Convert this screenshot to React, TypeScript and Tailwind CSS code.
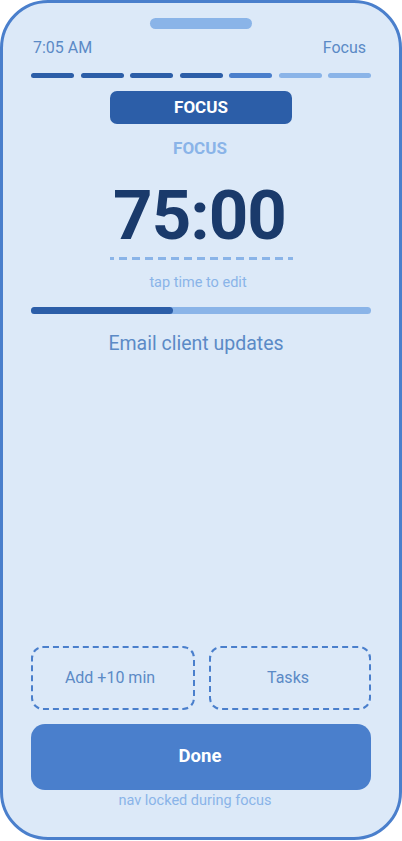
import React from "react";

export default function App() {
  const segs = ["#2c5ea8", "#2c5ea8", "#2c5ea8", "#2c5ea8", "#4a7fcc", "#8ab4e8", "#8ab4e8"];
  return (
    <div className="w-[402px] h-[841px] bg-white" style={{ fontFamily: "Roboto, 'Noto Sans', sans-serif" }}>
      <div className="w-[402px] h-[840px] rounded-[48px] border-[3px] border-[#4a7fcc] bg-[#dce9f8] flex flex-col px-[28px]">
        <div className="flex justify-center pt-[15px]">
          <div className="w-[102px] h-[11px] rounded-full bg-[#8ab4e8]" />
        </div>
        <div className="flex justify-between items-center mt-[9px] h-[20px] text-[16px] text-[#5b8ac6] pl-[2px] pr-[5px]">
          <span>7:05 AM</span>
          <span>Focus</span>
        </div>
        <div className="flex gap-[6.5px] mt-[15px]">
          {segs.map((c, i) => (
            <div key={i} className="flex-1 h-[5px] rounded-full" style={{ backgroundColor: c }} />
          ))}
        </div>
        <div className="flex justify-center mt-[13px]">
          <div className="w-[182px] h-[33px] rounded-[7px] bg-[#2c5ea8] flex items-center justify-center text-white font-bold text-[17px] pt-[1px]">
            FOCUS
          </div>
        </div>
        <div className="mt-[15px] h-[20px] flex items-center justify-center text-[17px] font-bold text-[#8ab4e8] pr-[2px]">
          FOCUS
        </div>
        <div className="mt-[22px] text-center text-[69px] leading-none font-bold text-[#1a3a6b] tracking-[-1px] pr-[3px]">
          75:00
        </div>
        <div className="flex justify-center mt-[7px]">
          <div className="w-[183px] h-[3px] bg-[repeating-linear-gradient(90deg,#8ab4e8_0_4px,transparent_4px_9px,#8ab4e8_9px_13px)]" />
        </div>
        <div className="mt-[14px] h-[18px] flex items-center justify-center text-[14.5px] text-[#8ab4e8] pr-[6px]">
          tap time to edit
        </div>
        <div className="mt-[15px] h-[7px] rounded-full bg-[#8ab4e8] flex">
          <div className="w-[142px] h-full rounded-full bg-[#2c5ea8]" />
        </div>
        <div className="mt-[17px] h-[26px] flex items-center justify-center text-[19.5px] text-[#5b8ac6] pr-[10px]">
          Email client updates
        </div>
        <div className="flex-1" />
        <div className="flex gap-[14px]">
          <div className="flex-1 h-[64px] rounded-[12px] border-[2.5px] border-dashed border-[#4a7fcc] flex items-center justify-center text-[16px] text-[#5b8ac6] pr-[6px]">
            Add +10 min
          </div>
          <div className="flex-1 h-[64px] rounded-[12px] border-[2.5px] border-dashed border-[#4a7fcc] flex items-center justify-center text-[16px] text-[#5b8ac6] pr-[4px]">
            Tasks
          </div>
        </div>
        <div className="mt-[14px] h-[66px] rounded-[14px] bg-[#4a7fcc] flex items-center justify-center text-white font-bold text-[18.5px] pr-[2px]">
          Done
        </div>
        <div className="mt-[2px] h-[18px] flex items-center justify-center text-[14.5px] text-[#8ab4e8] pr-[12px]">
          nav locked during focus
        </div>
        <div className="h-[27px]" />
      </div>
    </div>
  );
}
